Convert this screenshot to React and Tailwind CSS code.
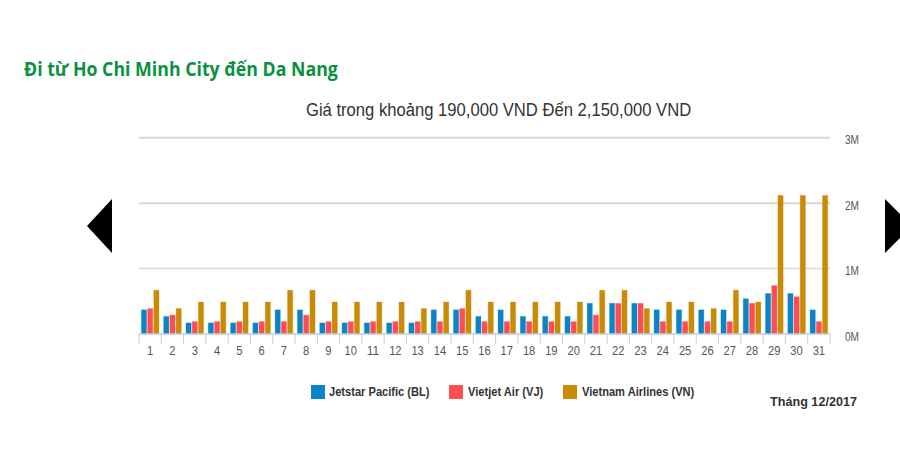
const series = [
  { name: "Jetstar Pacific (BL)", color: "#0a84c6" },
  { name: "Vietjet Air (VJ)", color: "#ff4d52" },
  { name: "Vietnam Airlines (VN)", color: "#c98a05" },
];

// one row per day: BL, VJ, VN (million VND)
const prices = [
  [0.38, 0.4, 0.68], [0.28, 0.3, 0.4], [0.18, 0.2, 0.5], [0.18, 0.2, 0.5],
  [0.18, 0.2, 0.5], [0.18, 0.2, 0.5], [0.38, 0.2, 0.68], [0.38, 0.3, 0.68],
  [0.18, 0.2, 0.5], [0.18, 0.2, 0.5], [0.18, 0.2, 0.5], [0.18, 0.2, 0.5],
  [0.18, 0.2, 0.4], [0.38, 0.2, 0.5], [0.38, 0.4, 0.68], [0.28, 0.2, 0.5],
  [0.38, 0.2, 0.5], [0.28, 0.2, 0.5], [0.28, 0.2, 0.5], [0.28, 0.2, 0.5],
  [0.48, 0.3, 0.68], [0.48, 0.48, 0.68], [0.48, 0.48, 0.4], [0.38, 0.2, 0.5],
  [0.38, 0.2, 0.5], [0.38, 0.2, 0.4], [0.38, 0.2, 0.68], [0.55, 0.48, 0.5],
  [0.63, 0.75, 2.13], [0.63, 0.58, 2.13], [0.38, 0.2, 2.13],
];

const plotWidth = 691;
const step = plotWidth / 31;
const baseY = 204;
const perMillion = 65.4;

function Chart() {
  return (
    <svg width="730" height="226" viewBox="0 0 730 226" className="block shrink-0 overflow-visible" style={{ fontFamily: "'Liberation Sans', Arial, sans-serif" }}>
      {[1, 2, 3].map((m) => (
        <line key={m} x1="0" x2={plotWidth} y1={baseY - m * perMillion} y2={baseY - m * perMillion} stroke="#d8d8d8" strokeWidth={m === 1 ? 1.5 : 2} />
      ))}
      {[0, 1, 2, 3].map((m) => (
        <text key={m} x="706" y={baseY - m * perMillion + 6.5} fontSize="12" fill="#555" textLength="14" lengthAdjust="spacingAndGlyphs">
          {m}M
        </text>
      ))}
      {prices.map((day, i) => (
        <g key={i}>
          {day.map((v, k) => (
            <rect
              key={k}
              x={i * step + 2.4 + k * 6.2}
              y={baseY - v * perMillion + 0.7}
              width="5.2"
              height={v * perMillion - 0.7}
              fill={series[k].color}
              stroke={series[k].color}
              strokeOpacity="0.3"
              strokeWidth="1"
            />
          ))}
          <text
            x={i * step + step / 2}
            y="225"
            fontSize="12"
            fill="#555"
            textAnchor="middle"
            textLength={i < 9 ? 6.2 : 12.4}
            lengthAdjust="spacingAndGlyphs"
          >
            {i + 1}
          </text>
        </g>
      ))}
      <line x1="0" x2={plotWidth} y1={baseY} y2={baseY} stroke="#c0d0e0" strokeWidth="1.5" />
      {Array.from({ length: 32 }, (_, i) => (
        <line key={i} x1={i * step} x2={i * step} y1={baseY} y2={baseY + 10} stroke="#c0d0e0" strokeWidth="1" />
      ))}
    </svg>
  );
}

function Arrow({ right }) {
  return (
    <svg width="27" height="54" viewBox="0 0 27 54" className="block">
      <path d={right ? "M0 0L27 27L0 54Z" : "M25 0L0 27L25 54Z"} fill="#000" />
    </svg>
  );
}

export default function App() {
  return (
    <div className="w-[900px] h-[471px] overflow-hidden bg-white font-['Liberation_Sans',Arial,sans-serif]">
      <h2 className="pt-[55px] ml-6 text-[20px] leading-[28px] font-bold text-[#0a9140] font-['Open_Sans',sans-serif] whitespace-nowrap origin-left scale-x-[0.887]">
        Đi từ Ho Chi Minh City đến Da Nang
      </h2>

      <p className="mt-[13px] ml-[306px] text-[18px] leading-[28px] text-[#333] whitespace-nowrap origin-left scale-x-[0.923]">
        Giá trong khoảng 190,000 VND Đến 2,150,000 VND
      </p>

      <div className="flex mt-[6px]">
        <div className="w-[139px] shrink-0 pl-[87px] pt-[69px]">
          <Arrow />
        </div>
        <Chart />
        <div className="pl-[16px] shrink-0 pt-[69px]">
          <Arrow right />
        </div>
      </div>

      <div className="flex items-start mt-[29px] pl-[311px] text-[12px] font-bold text-[#333]">
        {series.map((s, i) => (
          <div key={s.name} className={i === 0 ? "flex items-center gap-[4px] w-[138px]" : i === 1 ? "flex items-center gap-[5px] w-[114px]" : "flex items-center gap-[5px]"}>
            <span className="w-[14px] h-[14px] shrink-0" style={{ background: s.color }} />
            <span className="leading-[14px] whitespace-nowrap origin-left scale-x-[0.925]">{s.name}</span>
          </div>
        ))}
      </div>

      <p className="mt-[-6px] ml-[770px] text-[13.5px] leading-[18px] font-bold text-[#333] whitespace-nowrap origin-left scale-x-[0.935]">Tháng 12/2017</p>
    </div>
  );
}
